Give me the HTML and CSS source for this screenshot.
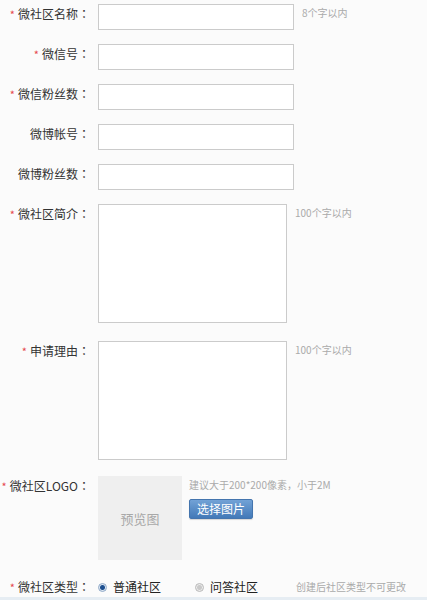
FILE: index.html
```html
<!DOCTYPE html>
<html lang="zh-CN">
<head>
  <meta charset="UTF-8">
  <meta name="viewport" content="width=device-width, initial-scale=1.0">
  <title>申请微社区</title>
  <link rel="stylesheet" href="styles.css">
</head>
<body>
  <form class="apply-form">
    <div class="row">
      <label class="label"><span class="req">*</span>微社区名称<span class="colon">：</span></label>
      <input class="text-input" type="text">
      <span class="hint">8个字以内</span>
    </div>

    <div class="row">
      <label class="label"><span class="req">*</span>微信号<span class="colon">：</span></label>
      <input class="text-input" type="text">
    </div>

    <div class="row">
      <label class="label"><span class="req">*</span>微信粉丝数<span class="colon">：</span></label>
      <input class="text-input" type="text">
    </div>

    <div class="row">
      <label class="label">微博帐号<span class="colon">：</span></label>
      <input class="text-input" type="text">
    </div>

    <div class="row">
      <label class="label">微博粉丝数<span class="colon">：</span></label>
      <input class="text-input" type="text">
    </div>

    <div class="row row-intro">
      <label class="label"><span class="req">*</span>微社区简介<span class="colon">：</span></label>
      <textarea class="text-area"></textarea>
      <span class="hint">100个字以内</span>
    </div>

    <div class="row row-reason">
      <label class="label"><span class="req">*</span>申请理由<span class="colon">：</span></label>
      <textarea class="text-area"></textarea>
      <span class="hint">100个字以内</span>
    </div>

    <div class="row row-logo">
      <label class="label"><span class="req">*</span>微社区LOGO<span class="colon">：</span></label>
      <div class="preview">预览图</div>
      <div class="upload">
        <span class="hint hint-logo">建议大于200*200像素，小于2M</span>
        <button type="button" class="btn-pick">选择图片</button>
      </div>
    </div>

    <div class="row row-type">
      <label class="label"><span class="req">*</span>微社区类型<span class="colon">：</span></label>
      <span class="radio-item"><i class="radio checked"></i>普通社区</span>
      <span class="radio-item"><i class="radio"></i>问答社区</span>
      <span class="hint hint-type">创建后社区类型不可更改</span>
    </div>
  </form>

  <div class="bottom-bar"></div>
</body>
</html>
```

FILE: styles.css
```css
body {
  margin: 0;
  padding-top: 4px;
  background: #fbfbfb;
  font-family: "Noto Sans CJK SC", "Noto Sans", sans-serif;
  font-size: 12px;
  color: #333;
}
.row {
  display: flex;
  align-items: flex-start;
  margin-bottom: 14px;
}
.label {
  width: 90px;
  margin-right: 8px;
  text-align: right;
  line-height: 20px;
  color: #333;
  text-spacing-trim: space-all;
}
.colon {
  display: inline-block;
  width: 12px;
  text-align: center;
  font-family: "Noto Sans CJK TC", sans-serif;
}
.req {
  color: #e5484d;
  margin-right: 3px;
  font-size: 11px;
}
.text-input {
  box-sizing: border-box;
  width: 196px;
  height: 26px;
  margin: 0;
  border: 1px solid #cbcbcb;
  background: #fff;
}
.text-area {
  box-sizing: border-box;
  width: 189px;
  height: 119px;
  margin: 0;
  border: 1px solid #cbcbcb;
  background: #fff;
  resize: none;
}
.hint {
  margin-left: 8px;
  font-size: 10px;
  line-height: 18px;
  color: #aaa;
}
.row-intro {
  margin-bottom: 18px;
}
.row-reason {
  margin-bottom: 16px;
}
.row-logo {
  margin-bottom: 17px;
}
.preview {
  width: 84px;
  height: 84px;
  background: #efefef;
  color: #a8a8a8;
  font-size: 13px;
  display: flex;
  align-items: center;
  justify-content: center;
}
.upload {
  display: flex;
  flex-direction: column;
  align-items: flex-start;
  margin-left: 7px;
}
.hint-logo {
  margin-left: 0;
}
.btn-pick {
  margin-top: 5px;
  width: 64px;
  height: 20px;
  padding: 0;
  border: 1px solid #4475ae;
  border-radius: 2px;
  background: linear-gradient(#72a2d6, #4279b8);
  box-shadow: 0 1px 1px rgba(0,0,0,0.15);
  color: #fff;
  font-family: inherit;
  font-size: 12px;
  line-height: 18px;
}
.row-type {
  align-items: center;
  margin-bottom: 0;
}
.radio-item {
  display: flex;
  align-items: center;
  line-height: 20px;
  color: #222;
  margin-right: 34px;
}
.radio {
  box-sizing: border-box;
  width: 9px;
  height: 9px;
  border-radius: 50%;
  margin-right: 6px;
  border: 1px solid #b8b8b8;
  background: radial-gradient(circle, #c9c9c9 0 2px, #ececec 3px);
}
.radio.checked {
  border-color: #8fa9c8;
  background: radial-gradient(circle, #1d4f8f 0 2px, #dde7f2 3px);
}
.hint-type {
  margin-left: 4px;
}
.bottom-bar {
  height: 10px;
  background: #e6edf3;
}
```
